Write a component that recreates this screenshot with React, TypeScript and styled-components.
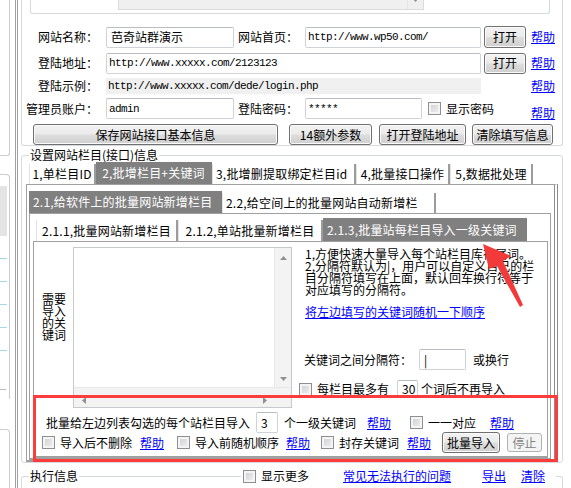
import React from "react";
import styled, { createGlobalStyle } from "styled-components";

const FONT = `"Noto Sans CJK SC", "Liberation Sans", sans-serif`;
const MONO = `"Liberation Mono", "Noto Sans CJK SC", monospace`;
const GROUP_LINE = "#d5dadf";
const TAB_LINE = "#a0a0a0";

const GlobalStyle = createGlobalStyle`
  html, body { margin: 0; padding: 0; background: #fff; }
  body { font-family: ${FONT}; font-size: 12px; color: #000; }
  * { box-sizing: border-box; }
`;

const Screen = styled.div`
  position: relative;
  width: 571px;
  height: 488px;
  overflow: hidden;
  display: flex;
  background: #fff;
  line-height: 14px;
`;

/* ---------- left strip ---------- */

const LeftStrip = styled.div`
  width: 19px;
  flex: none;
  display: flex;
  height: 100%;
`;

const LeftPane = styled.div`
  width: 10px;
  display: flex;
  flex-direction: column;
`;

const SidePanel = styled.div<{ $h: number; $mt?: number; $cut?: boolean }>`
  height: ${(p) => p.$h}px;
  margin-top: ${(p) => p.$mt ?? 0}px;
  border-right: 1px solid #c9cdd1;
  padding-right: 2px;
  ${(p) =>
    p.$cut
      ? `border-bottom: 1px solid #c9cdd1; border-bottom-right-radius: 3px;`
      : `border-top: 1px solid #c9cdd1; border-top-right-radius: 4px;`}
`;

const SideGrey = styled.div`
  margin-top: 11px;
  height: 50px;
  background: #e4e4e4;
`;

const SideRow = styled.div`
  height: 23px;
  border-bottom: 1px solid #a9d7e8;
`;

const SideMark = styled.div`
  margin-top: 38px;
  height: 6px;
  width: 6px;
  border-top: 1px solid #b8b8b8;
`;

const Divider = styled.div`
  margin-left: 5px;
  width: 3px;
  border-left: 1px solid #a0a0a0;
  border-right: 1px solid #a0a0a0;
`;

/* ---------- shared controls ---------- */

const Main = styled.div`
  width: 552px;
  padding: 0 8px 0 2px;
  display: flex;
  flex-direction: column;
`;

const Row = styled.div<{ $h: number; $mt?: number; $pl?: number }>`
  display: flex;
  align-items: center;
  height: ${(p) => p.$h}px;
  margin-top: ${(p) => p.$mt ?? 0}px;
  padding-left: ${(p) => p.$pl ?? 0}px;
  white-space: nowrap;
`;

const FormLabel = styled.span<{ $w: number; $ml?: number }>`
  width: ${(p) => p.$w}px;
  margin-left: ${(p) => p.$ml ?? 0}px;
  text-align: right;
  flex: none;
`;

const Text = styled.span<{ $ml?: number }>`
  margin-left: ${(p) => p.$ml ?? 0}px;
  flex: none;
`;

const Field = styled.div<{ $w: number; $h?: number; $ml?: number; $mono?: boolean }>`
  flex: none;
  width: ${(p) => p.$w}px;
  height: ${(p) => p.$h ?? 21}px;
  margin-left: ${(p) => p.$ml ?? 0}px;
  border: 1px solid #cfd2d6;
  border-top-color: #b9bdc3;
  border-radius: 2px;
  background: #fff;
  display: flex;
  align-items: center;
  padding-left: ${(p) => (p.$mono ? 2 : 4)}px;
  overflow: hidden;
  font-family: ${(p) => (p.$mono ? MONO : FONT)};
  font-size: ${(p) => (p.$mono ? 11 : 12)}px;
  letter-spacing: ${(p) => (p.$mono ? -0.6 : 0)}px;
`;

const ReadOnly = styled.div<{ $w: number; $ml?: number }>`
  flex: none;
  width: ${(p) => p.$w}px;
  height: 16px;
  margin-left: ${(p) => p.$ml ?? 0}px;
  background: #f0f0f0;
  display: flex;
  align-items: center;
  padding-left: 2px;
  font-family: ${MONO};
  font-size: 11px;
  letter-spacing: -0.6px;
`;

const Btn = styled.button<{ $w: number; $ml?: number; $h?: number; $off?: boolean }>`
  flex: none;
  width: ${(p) => p.$w}px;
  height: ${(p) => p.$h ?? 21}px;
  margin-left: ${(p) => p.$ml ?? 0}px;
  padding: 0;
  font-family: ${FONT};
  font-size: 12px;
  line-height: 14px;
  color: ${(p) => (p.$off ? "#838383" : "#000")};
  border: 1px solid ${(p) => (p.$off ? "#adb2b5" : "#707070")};
  border-radius: 3px;
  background: ${(p) =>
    p.$off
      ? "#f4f4f4"
      : "linear-gradient(#f2f2f2 0%, #ebebeb 48%, #dddddd 52%, #cfcfcf 100%)"};
  box-shadow: inset 0 0 0 1px ${(p) => (p.$off ? "#f4f4f4" : "#fbfbfb")};
`;

const HelpLink = styled.a<{ $ml?: number; $mt?: number }>`
  flex: none;
  margin-left: ${(p) => p.$ml ?? 0}px;
  margin-top: ${(p) => p.$mt ?? 0}px;
  color: #0000ff;
  text-decoration: underline;
  cursor: pointer;
`;

const Check = styled.span<{ $ml?: number }>`
  flex: none;
  display: inline-block;
  width: 13px;
  height: 13px;
  margin-left: ${(p) => p.$ml ?? 0}px;
  border: 1px solid #8e8f8f;
  background: linear-gradient(135deg, #cbcdd1 0%, #f3f3f3 100%);
  box-shadow: inset 0 0 0 2px #f4f4f4;
`;

/* ---------- top group ---------- */

const TopGroup = styled.div`
  margin-top: -4px;
  height: 150px;
  border: 1px solid ${GROUP_LINE};
  border-top: none;
  border-radius: 0 0 3px 3px;
  padding-left: 4px;
`;

const CutBox = styled.div`
  margin-left: 4px;
  width: 520px;
  height: 18px;
  border: 1px solid ${GROUP_LINE};
  border-top: none;
  border-radius: 0 0 3px 3px;
`;

const CutMemo = styled.div`
  margin-left: 87px;
  width: 306px;
  height: 14px;
  background: #f0f0f0;
  border: 1px solid #dcdcdc;
  border-top: none;
  display: flex;
  justify-content: flex-end;
`;

const CutScroll = styled.div`
  width: 16px;
  display: flex;
  justify-content: center;
  padding-top: 2px;
  border-left: 1px solid #e4e4e4;
`;

/* ---------- group box with legend ---------- */

const GroupBox = styled.div<{ $h: number; $mt: number; $open?: boolean }>`
  height: ${(p) => p.$h}px;
  margin-top: ${(p) => p.$mt}px;
  border: 1px solid ${GROUP_LINE};
  border-radius: 3px;
  ${(p) => (p.$open ? "border-bottom: none; border-radius: 3px 3px 0 0;" : "")}
`;

const Legend = styled.div`
  margin: -8px 0 0 7px;
  padding: 0 1px;
  height: 14px;
  width: fit-content;
  background: #fff;
`;

/* ---------- tabs ---------- */

const TabArea = styled.div<{ $ml: number; $w: number }>`
  margin-left: ${(p) => p.$ml}px;
  width: ${(p) => p.$w}px;
`;

const TabRow = styled.div<{ $h: number; $pl: number }>`
  display: flex;
  align-items: flex-end;
  height: ${(p) => p.$h}px;
  padding-left: ${(p) => p.$pl}px;
`;

const Tab = styled.div<{ $w: number; $on?: boolean; $h: number; $left?: boolean }>`
  flex: none;
  width: ${(p) => p.$w}px;
  height: ${(p) => (p.$on ? p.$h : p.$h - 2)}px;
  display: flex;
  align-items: center;
  justify-content: ${(p) => (p.$left ? "flex-start" : "center")};
  padding: 0 3px;
  overflow: hidden;
  white-space: nowrap;
  background: ${(p) => (p.$on ? "#808080" : "#fff")};
  color: ${(p) => (p.$on ? "#fff" : "#000")};
  border-left: 1px solid ${(p) => (p.$on ? "#808080" : "#e3e3e3")};
  border-right: 2px solid ${(p) => (p.$on ? "#808080" : "#9c9c9c")};
  letter-spacing: 0.2px;
`;

const TabPage = styled.div<{ $h: number; $pl: number; $pt: number; $double?: boolean }>`
  height: ${(p) => p.$h}px;
  padding: ${(p) => p.$pt}px 0 0 ${(p) => p.$pl}px;
  border: 1px solid ${TAB_LINE};
  border-right: ${(p) => (p.$double ? `4px double #8c8c8c` : `1px solid ${TAB_LINE}`)};
  border-bottom-width: 2px;
`;

/* ---------- keyword page ---------- */

const KeywordTop = styled.div`
  display: flex;
  height: 167px;
`;

const SideCaption = styled.div`
  flex: none;
  width: 24px;
  margin: 51px 7px 0 8px;
  line-height: 12px;
  word-break: break-all;
  align-self: flex-start;
`;

const Memo = styled.div`
  flex: none;
  width: 219px;
  height: 161px;
  margin-top: 5px;
  border: 1px solid #c6c9cd;
  display: grid;
  grid-template-columns: 1fr 17px;
  grid-template-rows: 1fr 20px;
`;

const VScroll = styled.div`
  background: #f3f3f3;
  border-left: 1px solid #e8e8e8;
  display: flex;
  flex-direction: column;
  justify-content: space-between;
  align-items: center;
  padding: 8px 0 6px;
`;

const HScroll = styled.div`
  grid-column: 1 / 3;
  background: #f3f3f3;
  border-top: 1px solid #e8e8e8;
  display: flex;
  justify-content: space-between;
  align-items: flex-start;
  padding: 9px 24px 0 8px;
`;

const RightCol = styled.div`
  flex: none;
  margin: 6px 0 0 7px;
  width: 248px;
  display: flex;
  flex-direction: column;
`;

const Notes = styled.div`
  padding-left: 6px;
  line-height: 12px;
  white-space: nowrap;
`;

const NoteLink = styled(HelpLink)`
  margin: 10px 0 0 6px;
  line-height: 12px;
  width: fit-content;
`;

const RedFrame = styled.div`
  position: absolute;
  left: 33px;
  top: 395px;
  width: 525px;
  height: 67px;
  border: 3px solid #ff3c3c;
  pointer-events: none;
`;

const PointerArrow = styled.svg`
  position: absolute;
  left: 478px;
  top: 240px;
  pointer-events: none;
`;

const LogHead = styled.div`
  display: flex;
  align-items: center;
  margin-top: -8px;
  height: 14px;
  white-space: nowrap;
`;

const LogTools = styled.div`
  display: flex;
  align-items: center;
  margin-left: 162px;
  padding-left: 2px;
  width: 315px;
  background: #fff;
`;

const ScrollArrow = ({ dir }: { dir: "up" | "down" | "left" | "right" }) => {
  const horiz = dir === "left" || dir === "right";
  const pts = {
    up: "0,4 3.5,0 7,4",
    down: "0,0 7,0 3.5,4",
    left: "4,0 4,7 0,3.5",
    right: "0,0 4,3.5 0,7",
  }[dir];
  return (
    <svg width={horiz ? 4 : 7} height={horiz ? 7 : 4} viewBox={horiz ? "0 0 4 7" : "0 0 7 4"}>
      <polygon points={pts} fill="#909090" />
    </svg>
  );
};

const App = () => {
  return (
    <Screen>
      <GlobalStyle />
      <LeftStrip>
        <LeftPane>
          <SidePanel $h={160} $cut />
          <SidePanel $h={230} $mt={18}>
            <SideGrey />
            <SideRow />
            <SideRow />
            <SideRow />
            <SideRow />
            <SideRow />
            <SideMark />
          </SidePanel>
          <SidePanel $h={60} $mt={30} />
        </LeftPane>
        <Divider />
      </LeftStrip>

      <Main>
        <TopGroup>
          <CutBox>
            <CutMemo>
              <CutScroll>
                <ScrollArrow dir="down" />
              </CutScroll>
            </CutMemo>
          </CutBox>

          <Row $h={22} $mt={12}>
            <FormLabel $w={72}>网站名称：</FormLabel>
            <Field $w={128} $ml={8}>芭奇站群演示</Field>
            <FormLabel $w={60} $ml={4}>网站首页：</FormLabel>
            <Field $w={176} $ml={7} $mono>http://www.wp50.com/</Field>
            <Btn $w={42} $ml={3} $h={22}>打开</Btn>
            <HelpLink $ml={5}>帮助</HelpLink>
          </Row>
          <Row $h={22} $mt={4}>
            <FormLabel $w={72}>登陆地址：</FormLabel>
            <Field $w={375} $ml={8} $mono>http://www.xxxxx.com/2123123</Field>
            <Btn $w={42} $ml={3} $h={21}>打开</Btn>
            <HelpLink $ml={5}>帮助</HelpLink>
          </Row>
          <Row $h={18} $mt={3}>
            <FormLabel $w={72}>登陆示例：</FormLabel>
            <ReadOnly $w={375} $ml={8}>http://www.xxxxx.com/dede/login.php</ReadOnly>
            <HelpLink $ml={50}>帮助</HelpLink>
          </Row>
          <Row $h={21} $mt={3}>
            <FormLabel $w={72}>管理员账户：</FormLabel>
            <Field $w={128} $ml={8} $mono>admin</Field>
            <FormLabel $w={60} $ml={4}>登陆密码：</FormLabel>
            <Field $w={117} $ml={7} $mono>*****</Field>
            <Check $ml={6} />
            <Text $ml={5}>显示密码</Text>
            <HelpLink $ml={37} $mt={8}>帮助</HelpLink>
          </Row>
          <Row $h={21} $mt={5}>
            <Btn $w={245} $ml={7}>保存网站接口基本信息</Btn>
            <Btn $w={83} $ml={11}>14额外参数</Btn>
            <Btn $w={87} $ml={7}>打开登陆地址</Btn>
            <Btn $w={81} $ml={6}>清除填写信息</Btn>
          </Row>
        </TopGroup>

        <GroupBox $h={310} $mt={9}>
          <Legend>设置网站栏目(接口)信息</Legend>
          <TabArea $ml={4} $w={532}>
            <TabRow $h={22} $pl={3}>
              <Tab $w={67} $h={22}>1,单栏目ID</Tab>
              <Tab $w={116} $h={22} $on>2,批增栏目+关键词</Tab>
              <Tab $w={144} $h={22} $left>3,批增删提取绑定栏目id</Tab>
              <Tab $w={94} $h={22}>4,批量接口操作</Tab>
              <Tab $w={83} $h={22}>5,数据批处理</Tab>
            </TabRow>
            <TabPage $h={278} $pl={2} $pt={6} $double>
              <TabArea $ml={0} $w={522}>
                <TabRow $h={22} $pl={0}>
                  <Tab $w={193} $h={22} $on $left>2.1,给软件上的批量网站新增栏目</Tab>
                  <Tab $w={214} $h={22} $left>2.2,给空间上的批量网站自动新增栏</Tab>
                </TabRow>
                <TabPage $h={247} $pl={3} $pt={4}>
                  <TabArea $ml={0} $w={515}>
                    <TabRow $h={23} $pl={3}>
                      <Tab $w={142} $h={23}>2.1.1,批量网站新增栏目</Tab>
                      <Tab $w={145} $h={23}>2.1.2,单站批量新增栏目</Tab>
                      <Tab $w={204} $h={23} $on $left>2.1.3,批量站每栏目导入一级关键词</Tab>
                    </TabRow>
                    <TabPage $h={217} $pl={0} $pt={0}>
                      <KeywordTop>
                        <SideCaption>需要导入的关键词</SideCaption>
                        <Memo>
                          <div />
                          <VScroll>
                            <ScrollArrow dir="up" />
                            <ScrollArrow dir="down" />
                          </VScroll>
                          <HScroll>
                            <ScrollArrow dir="left" />
                            <ScrollArrow dir="right" />
                          </HScroll>
                        </Memo>
                        <RightCol>
                          <Notes>
                            1,方便快速大量导入每个站栏目库存尾词。
                            <br />
                            2,分隔符默认为|，用户可以自定义自己的栏
                            <br />
                            目分隔符填写在上面，默认回车换行符等于
                            <br />
                            对应填写的分隔符。
                          </Notes>
                          <NoteLink>将左边填写的关键词随机一下顺序</NoteLink>
                          <Row $h={21} $mt={31} $pl={5}>
                            <Text>关键词之间分隔符：</Text>
                            <Field $w={47} $ml={7}>|</Field>
                            <Text $ml={7}>或换行</Text>
                          </Row>
                          <Row $h={18} $mt={10}>
                            <Check />
                            <Text $ml={5}>每栏目最多有</Text>
                            <Field $w={21} $h={18} $ml={8}>30</Field>
                            <Text $ml={3}>个词后不再导入</Text>
                          </Row>
                        </RightCol>
                      </KeywordTop>

                      <Row $h={21} $mt={3} $pl={12}>
                        <Text>批量给左边列表勾选的每个站栏目导入</Text>
                        <Field $w={22} $ml={6}>3</Field>
                        <Text $ml={6}>个一级关键词</Text>
                        <HelpLink $ml={11}>帮助</HelpLink>
                        <Check $ml={19} />
                        <Text $ml={5}>一一对应</Text>
                        <HelpLink $ml={14}>帮助</HelpLink>
                      </Row>
                      <Row $h={21} $mt={-1} $pl={8}>
                        <Check />
                        <Text $ml={5}>导入后不删除</Text>
                        <HelpLink $ml={8}>帮助</HelpLink>
                        <Check $ml={13} />
                        <Text $ml={5}>导入前随机顺序</Text>
                        <HelpLink $ml={7}>帮助</HelpLink>
                        <Check $ml={11} />
                        <Text $ml={5}>封存关键词</Text>
                        <HelpLink $ml={8}>帮助</HelpLink>
                        <Btn $w={58} $ml={11}>批量导入</Btn>
                        <Btn $w={35} $h={19} $ml={7} $off>停止</Btn>
                      </Row>
                    </TabPage>
                  </TabArea>
                </TabPage>
              </TabArea>
            </TabPage>
          </TabArea>
        </GroupBox>

        <GroupBox $h={20} $mt={13} $open>
          <LogHead>
            <Legend as="span" style={{ marginTop: 0 }}>执行信息</Legend>
            <LogTools>
              <Check />
              <Text $ml={5}>显示更多</Text>
              <HelpLink $ml={34}>常见无法执行的问题</HelpLink>
              <HelpLink $ml={31}>导出</HelpLink>
              <HelpLink $ml={15}>清除</HelpLink>
            </LogTools>
          </LogHead>
        </GroupBox>
      </Main>

      <RedFrame />
      <PointerArrow width={50} height={72} viewBox="0 0 50 72">
        <polygon points="5,4 33,16 25,21 45,65 42,67 19,26 11,29" fill="#f23a3a" />
      </PointerArrow>
    </Screen>
  );
};

export default App;
